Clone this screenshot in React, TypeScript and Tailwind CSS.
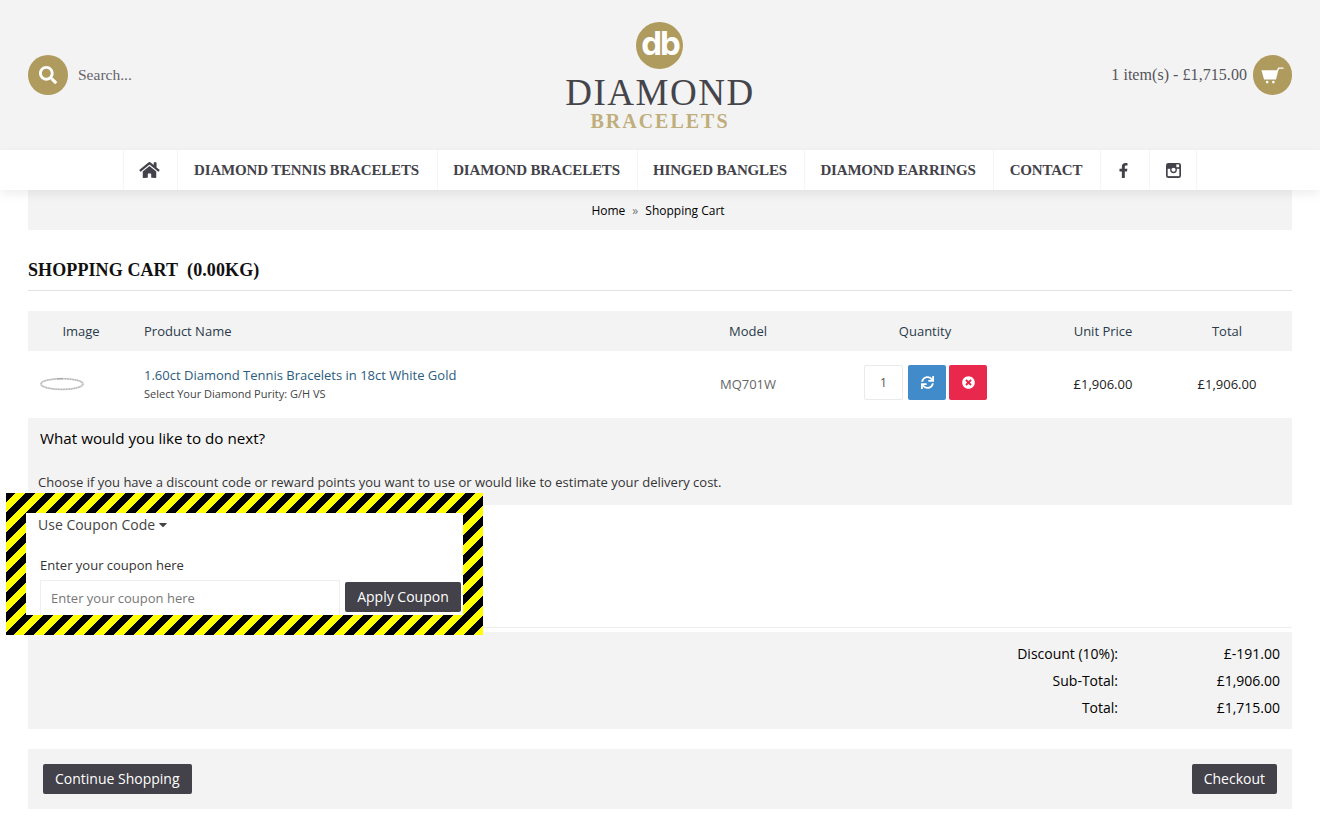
import React from "react";
import { FaSearch, FaHome, FaFacebookF, FaSync, FaTimesCircle, FaCaretDown } from "react-icons/fa";

const serif = "font-['Liberation_Serif','DejaVu_Serif',serif]";

function CartIcon() {
  return (
    <svg viewBox="0 0 26 20" className="w-[23px] h-[18px]" fill="#fff">
      <path d="M0.5 4.5H19.5L17 15H3.5Z" />
      <path d="M18 6 L20 2.2 H25.5" fill="none" stroke="#fff" strokeWidth="1.6" />
      <circle cx="7" cy="18" r="1.5" />
      <circle cx="14" cy="18" r="1.5" />
    </svg>
  );
}

function InstagramIcon() {
  return (
    <svg viewBox="0 0 16 16" className="w-[15px] h-[15px]">
      <rect width="16" height="16" rx="2.5" fill="#434149" />
      <rect x="1.8" y="6.2" width="12.4" height="7.8" fill="#fff" />
      <rect x="11" y="1.5" width="3" height="3" fill="#fff" />
      <circle cx="8" cy="7.2" r="3.6" fill="#434149" />
      <circle cx="8" cy="7.2" r="2.2" fill="#fff" />
    </svg>
  );
}

function Bracelet() {
  return (
    <svg viewBox="0 0 46 16" className="w-[46px] h-[16px]">
      <ellipse cx="23" cy="8" rx="21" ry="5.4" fill="none" stroke="#d0d0d0" strokeWidth="1.8" />
      <ellipse cx="23" cy="8" rx="21" ry="5.4" fill="none" stroke="#999" strokeWidth="0.8" strokeDasharray="1 1.5" />
      <rect x="18" y="2" width="6" height="1.4" fill="#aaa" />
    </svg>
  );
}

const navItem = "flex items-center justify-center h-full border-r border-[#f5f5f5]";
const navText = `${serif} font-bold text-[#434149] text-[15px] tracking-[-0.17px] whitespace-nowrap pr-[2px]`;

function Row({ label, value }: { label: string; value: string }) {
  return (
    <div className="flex justify-end h-[27px] items-center text-[14px] text-black">
      <span className="text-right">{label}</span>
      <span className="w-[162px] text-right">{value}</span>
    </div>
  );
}

export default function App() {
  return (
    <div className="w-[1320px] h-[840px] overflow-hidden bg-white font-['Open_Sans',sans-serif] text-[#333] text-[13px]">
      <header className="h-[150px] bg-[#f3f3f3] px-[28px] flex items-center justify-between">
        <div className="flex items-center w-[300px]">
          <span className="w-[40px] h-[40px] rounded-full bg-[#af9b5e] flex items-center justify-center text-white">
            <FaSearch className="w-[18px] h-[18px]" />
          </span>
          <span className={`${serif} ml-[10px] text-[15.5px] text-[#66646b]`}>Search...</span>
        </div>
        <div className="flex flex-col items-center pt-[2px]">
          <span className="w-[47px] h-[47px] rounded-full bg-[#af9b5e] flex items-center justify-center text-white font-['Inter',sans-serif] text-[33px] font-bold leading-none tracking-[-2px] pb-[4px]">
            db
          </span>
          <span className={`${serif} text-[#45444a] text-[37px] leading-[36px] mt-[6px] tracking-[1.5px]`}>DIAMOND</span>
          <span className={`${serif} text-[#bfae7c] text-[20px] leading-[20px] font-bold tracking-[2px]`}>BRACELETS</span>
        </div>
        <div className="flex items-center justify-end w-[300px]">
          <span className={`${serif} text-[16px] tracking-[0.05px] text-[#55545a]`}>1 item(s) - £1,715.00</span>
          <span className="ml-[6px] w-[39px] h-[40px] rounded-full bg-[#af9b5e] flex items-center justify-center">
            <CartIcon />
          </span>
        </div>
      </header>

      <nav className="relative z-[1] h-[40px] bg-white shadow-[0_4px_10px_rgba(0,0,0,0.07)] flex justify-center">
        <div className={`${navItem} border-l w-[55px] pr-[3px]`}><FaHome className="w-[21px] h-[18px] text-[#434149]" /></div>
        <div className={`${navItem} w-[260px]`}><span className={navText}>DIAMOND TENNIS BRACELETS</span></div>
        <div className={`${navItem} w-[200px]`}><span className={navText}>DIAMOND BRACELETS</span></div>
        <div className={`${navItem} w-[167px]`}><span className={navText}>HINGED BANGLES</span></div>
        <div className={`${navItem} w-[189px]`}><span className={navText}>DIAMOND EARRINGS</span></div>
        <div className={`${navItem} w-[107px]`}><span className={navText}>CONTACT</span></div>
        <div className={`${navItem} w-[49px] pr-[3px]`}><FaFacebookF className="w-[11px] h-[15px] text-[#434149]" /></div>
        <div className={`${navItem} w-[47px]`}><InstagramIcon /></div>
      </nav>

      <main className="px-[28px]">
        <div className="h-[40px] bg-[#f3f3f3] flex items-center justify-center pt-[2px] pr-[4px] text-[12px] text-black">
          <span>Home</span>
          <span className="mx-[7px] text-[#777]">»</span>
          <span>Shopping Cart</span>
        </div>

        <h1 className={`${serif} h-[61px] pt-[28px] border-b border-[#e3e3e3] font-bold text-[#111] text-[18px] tracking-[0.1px] leading-[24px] whitespace-pre`}>
          SHOPPING CART  (0.00KG)
        </h1>

        <div className="mt-[20px] grid grid-cols-[106px_556px_116px_238px_118px_130px] items-center h-[40px] pt-[2px] bg-[#f3f3f3] text-[#2a3a4a]">
          <div className="text-center">Image</div>
          <div className="pl-[10px]">Product Name</div>
          <div className="text-center">Model</div>
          <div className="text-center">Quantity</div>
          <div className="text-center">Unit Price</div>
          <div className="text-center">Total</div>
        </div>
        <div className="grid grid-cols-[106px_556px_116px_238px_118px_130px] items-center h-[67px]">
          <div className="flex justify-start pl-[11px] pb-[2px]"><Bracelet /></div>
          <div className="pl-[10px] pb-[2px]">
            <div className="text-[#2b5c7e] leading-[18px]">1.60ct Diamond Tennis Bracelets in 18ct White Gold</div>
            <div className="text-[11px] text-[#444] leading-[16px] mt-[2px]">Select Your Diamond Purity: G/H VS</div>
          </div>
          <div className="text-center text-[#666]">MQ701W</div>
          <div className="flex items-center justify-center pb-[4px] pl-[1px]">
            <span className="w-[39px] h-[35px] border border-[#eaeaea] rounded-[2px] flex items-center justify-center text-[12px] text-[#555]">1</span>
            <span className="ml-[5px] w-[38px] h-[35px] rounded-[2px] bg-[#428bca] flex items-center justify-center text-white"><FaSync className="w-[13px] h-[13px]" /></span>
            <span className="ml-[3px] w-[38px] h-[35px] rounded-[2px] bg-[#e8294d] flex items-center justify-center text-white"><FaTimesCircle className="w-[13px] h-[13px]" /></span>
          </div>
          <div className="text-center text-[#222]">£1,906.00</div>
          <div className="text-center text-[#222]">£1,906.00</div>
        </div>

        <div className="h-[87px] bg-[#f3f3f3] px-[10px]">
          <h2 className="pl-[2px] pt-[9px] text-[15.2px] leading-[22px] text-black">What would you like to do next?</h2>
          <p className="mt-[24px] text-[13px] leading-[18px] text-[#333]">Choose if you have a discount code or reward points you want to use or would like to estimate your delivery cost.</p>
        </div>

        <div className="relative h-[123px] border-b border-[#eee]">
          <div className="absolute left-[-22px] top-[-12px] z-10 w-[477px] h-[142px] p-[20px] bg-[repeating-linear-gradient(135deg,#000_0,#000_7.07px,#ff0_7.07px,#ff0_14.14px)]">
            <div className="h-full bg-white overflow-hidden">
              <div className="pl-[12px] flex items-center h-[23px] text-[14px] text-[#444]">
                Use Coupon Code<FaCaretDown className="w-[10px] h-[13px] ml-[3px]" />
              </div>
              <div className="pl-[14px] mt-[20px] text-[13px] leading-[18px] text-[#333]">Enter your coupon here</div>
              <div className="pl-[14px] mt-[6px] flex items-start">
                <span className="w-[300px] h-[36px] border border-[#eee] pl-[10px] pt-[8px] text-[13px] leading-[18px] text-[#777]">Enter your coupon here</span>
                <span className="ml-[5px] mt-[2px] w-[116px] h-[30px] pb-[2px] rounded-[2px] bg-[#434149] text-white text-[14px] flex items-center justify-center">Apply Coupon</span>
              </div>
            </div>
          </div>
        </div>

        <div className="mt-[4px] h-[97px] bg-[#f3f3f3] pt-[8px] pr-[12px]">
          <Row label="Discount (10%):" value="£-191.00" />
          <Row label="Sub-Total:" value="£1,906.00" />
          <Row label="Total:" value="£1,715.00" />
        </div>

        <div className="mt-[20px] h-[60px] bg-[#f3f3f3] px-[15px] flex items-center justify-between">
          <span className="h-[30px] px-[12px] pb-[2px] rounded-[2px] bg-[#434149] text-white text-[14px] flex items-center">Continue Shopping</span>
          <span className="h-[30px] px-[12px] pb-[2px] rounded-[2px] bg-[#434149] text-white text-[14px] flex items-center">Checkout</span>
        </div>
      </main>
    </div>
  );
}
